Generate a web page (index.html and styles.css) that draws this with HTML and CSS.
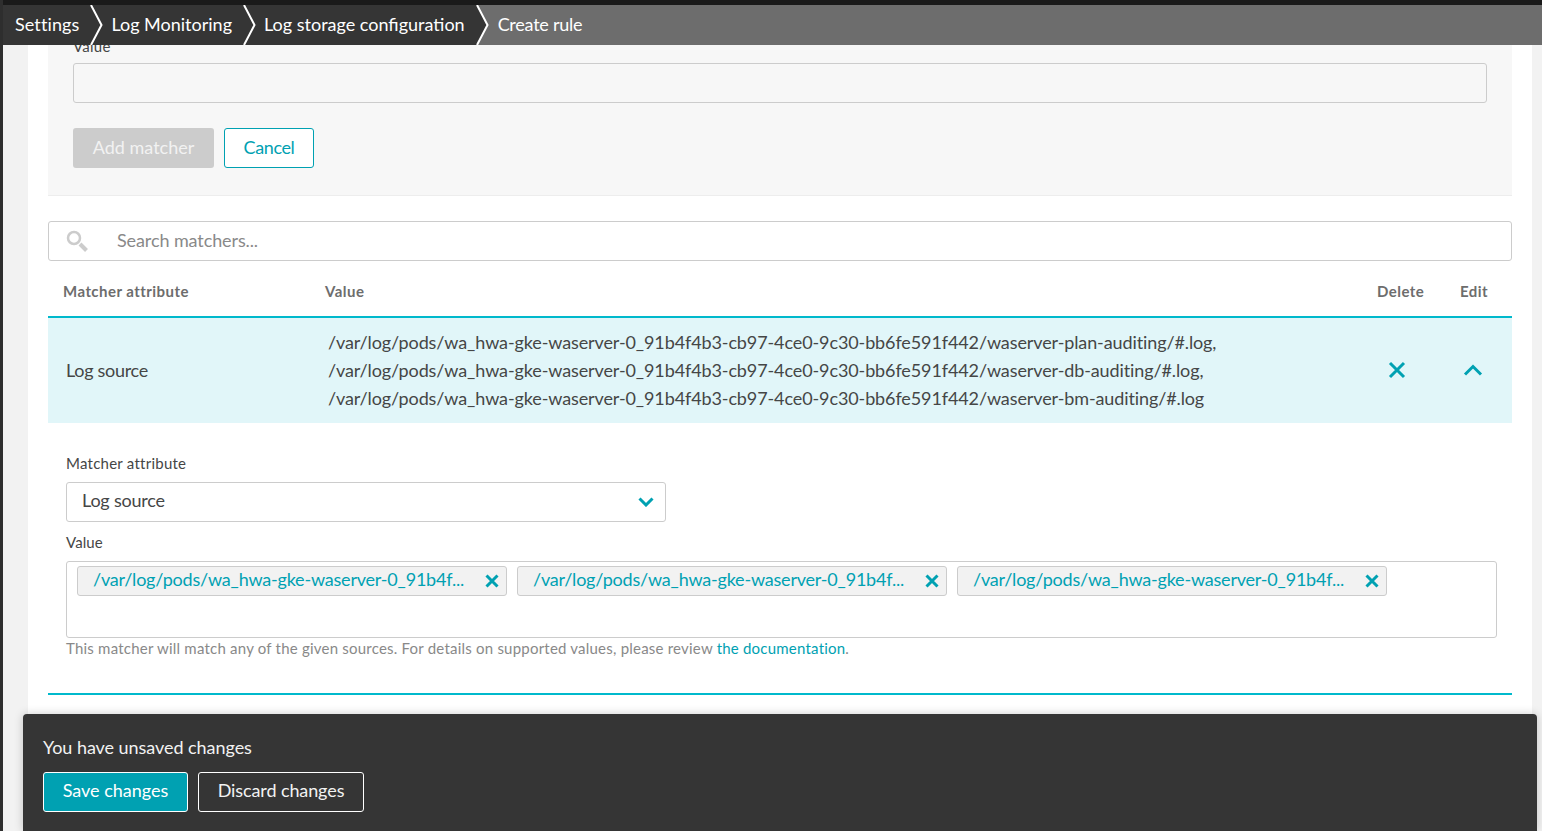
FILE: index.html
```html
<!DOCTYPE html>
<html lang="en">
<head>
    <meta charset="UTF-8">
    <title>Create rule</title>
    <link rel="stylesheet" href="styles.css">
</head>
<body>
    <div class="top-strip"></div>

    <!-- breadcrumbs -->
    <nav class="crumbs">
        <a class="crumb crumb-first">Settings<svg class="crumb-arrow" viewBox="0 0 13 40"><path d="M1 0 L11.5 20 L1 40"/></svg></a>
        <a class="crumb">Log Monitoring<svg class="crumb-arrow" viewBox="0 0 13 40"><path d="M1 0 L11.5 20 L1 40"/></svg></a>
        <a class="crumb">Log storage configuration<svg class="crumb-arrow crumb-arrow-last" viewBox="0 0 13 40"><path class="arrow-fill" d="M0 0 L1 0 L11.5 20 L1 40 L0 40 Z"/><path d="M1 0 L11.5 20 L1 40"/></svg></a>
        <span class="crumb-current">Create rule</span>
    </nav>

    <main class="page">
        <section class="add-panel">
            <label class="field-label">Value</label>
            <div class="panel-input"></div>
            <div class="panel-actions">
                <button class="btn btn-disabled">Add matcher</button>
                <button class="btn btn-outline">Cancel</button>
            </div>
        </section>

        <div class="search-box">
            <svg class="search-icon" viewBox="0 0 22 22"><circle cx="8" cy="8" r="6"/><path class="search-handle" d="M14 14 L20.5 20.5"/></svg>
            <span>Search matchers...</span>
        </div>

        <div class="table-head">
            <span class="col-attr">Matcher attribute</span>
            <span class="col-value">Value</span>
            <span class="col-delete">Delete</span>
            <span class="col-edit">Edit</span>
        </div>

        <div class="table-row">
            <span class="row-attr">Log source</span>
            <div class="row-value">
                /var/log/pods/wa_hwa-gke-waserver-0_91b4f4b3-cb97-4ce0-9c30-bb6fe591f442/waserver-plan-auditing/#.log,<br>
                /var/log/pods/wa_hwa-gke-waserver-0_91b4f4b3-cb97-4ce0-9c30-bb6fe591f442/waserver-db-auditing/#.log,<br>
                /var/log/pods/wa_hwa-gke-waserver-0_91b4f4b3-cb97-4ce0-9c30-bb6fe591f442/waserver-bm-auditing/#.log
            </div>
            <div class="row-delete">
                <svg class="icon-x" viewBox="0 0 18 18"><path d="M2 2 L16 16 M16 2 L2 16"/></svg>
            </div>
            <div class="row-edit">
                <svg class="icon-up" viewBox="0 0 20 12"><path d="M2 10.5 L10 2.5 L18 10.5"/></svg>
            </div>
        </div>

        <section class="edit-form">
            <label class="form-label">Matcher attribute</label>
            <div class="select-box">
                <span class="select-text">Log source</span>
                <svg class="icon-down" viewBox="0 0 16 10"><path d="M1.5 1.5 L8 8 L14.5 1.5"/></svg>
            </div>
            <label class="form-label form-label-value">Value</label>
            <div class="chips-box">
                <div class="chip">
                    <span class="chip-text">/var/log/pods/wa_hwa-gke-waserver-0_91b4f...</span>
                    <svg class="chip-x" viewBox="0 0 14 14"><path d="M1.5 1.5 L12.5 12.5 M12.5 1.5 L1.5 12.5"/></svg>
                </div>
                <div class="chip">
                    <span class="chip-text">/var/log/pods/wa_hwa-gke-waserver-0_91b4f...</span>
                    <svg class="chip-x" viewBox="0 0 14 14"><path d="M1.5 1.5 L12.5 12.5 M12.5 1.5 L1.5 12.5"/></svg>
                </div>
                <div class="chip">
                    <span class="chip-text">/var/log/pods/wa_hwa-gke-waserver-0_91b4f...</span>
                    <svg class="chip-x" viewBox="0 0 14 14"><path d="M1.5 1.5 L12.5 12.5 M12.5 1.5 L1.5 12.5"/></svg>
                </div>
            </div>
            <p class="help-text">This matcher will match any of the given sources. For details on supported values, please review <a>the documentation</a>.</p>
        </section>

        <div class="row-end-line"></div>
    </main>

    <!-- unsaved changes bar -->
    <div class="unsaved-bar">
        <p class="unsaved-title">You have unsaved changes</p>
        <div class="unsaved-actions">
            <button class="btn btn-save">Save changes</button>
            <button class="btn btn-discard">Discard changes</button>
        </div>
    </div>
</body>
</html>
```

FILE: styles.css
```css
* {
    box-sizing: border-box;
}

html, body {
    height: 100%;
}

body {
    margin: 0;
    overflow: hidden;
    background-color: #f2f2f2;
    border-left: 3px solid #2e2e2e;
    font-family: "Lato", "Noto Sans", sans-serif;
    font-size: 16px;
    color: #454646;
    position: relative;
}

.top-strip {
    height: 5px;
    margin-left: -3px;
    background-color: #1a1a1a;
}

/* breadcrumbs */
.crumbs {
    display: flex;
    align-items: center;
    height: 40px;
    background-color: #6d6d6d;
    color: #fff;
    font-size: 18px;
    position: relative;
    z-index: 2;
}

.crumb {
    display: flex;
    align-items: center;
    height: 40px;
    padding: 0 0 2px 8px;
    background-color: #353535;
}

.crumb-first {
    padding-left: 12px;
    letter-spacing: 0.1px;
}

.crumb-arrow {
    width: 13px;
    height: 40px;
    margin: 0 0 -2px 11px;
    flex: none;
}

.crumb-arrow path {
    fill: none;
    stroke: #fff;
    stroke-width: 2;
}

.crumb-arrow-last {
    background-color: #6d6d6d;
}

.crumb-arrow .arrow-fill {
    fill: #353535;
    stroke: none;
}

.crumb-current {
    padding-left: 9px;
    padding-bottom: 2px;
    letter-spacing: -0.25px;
}

/* page */
.page {
    width: 1504px;
    margin-left: 25px;
    margin-top: -15px;
    padding: 0 20px;
    height: 800px;
    background-color: #fff;
}

.add-panel {
    height: 166px;
    padding: 7px 25px 0;
    background-color: #f7f7f7;
    border-bottom: 1px solid #ededed;
}

.field-label {
    display: block;
    height: 18px;
    font-size: 15px;
    line-height: 18px;
    letter-spacing: 0.25px;
}

.panel-input {
    height: 40px;
    width: 1414px;
    margin-top: 8px;
    border: 1px solid #ccc;
    border-radius: 3px;
}

.panel-actions {
    display: flex;
    gap: 10px;
    margin-top: 25px;
}

.btn {
    height: 40px;
    padding: 0 0 2px;
    border-radius: 3px;
    font-family: inherit;
    font-size: 18px;
    white-space: nowrap;
    border: 1px solid transparent;
}

.btn-disabled {
    width: 141px;
    background-color: #ccc;
    color: #f2f2f2;
}

.btn-outline {
    width: 90px;
    background-color: #fff;
    border-color: #00a1b2;
    color: #00a1b2;
    letter-spacing: -0.4px;
}

.search-box {
    display: flex;
    align-items: center;
    height: 40px;
    margin-top: 25px;
    padding: 0 0 2px 17px;
    border: 1px solid #ccc;
    border-radius: 3px;
    font-size: 18px;
    letter-spacing: -0.1px;
    color: #898989;
}

.search-icon {
    width: 22px;
    height: 22px;
    margin-right: 29px;
    margin-top: 2px;
}

.search-icon circle {
    fill: none;
    stroke: #ccc;
    stroke-width: 2.5;
}

.search-handle {
    stroke: #ccc;
    stroke-width: 4;
}

.table-head {
    display: flex;
    align-items: center;
    height: 55px;
    padding-top: 4px;
    font-size: 15px;
    font-weight: 700;
    letter-spacing: 0.45px;
    color: #6d6d6d;
}

.col-attr {
    width: 277px;
    padding-left: 15px;
}

.col-value {
    width: 1052px;
}

.col-delete {
    width: 83px;
}

.table-row {
    display: flex;
    align-items: center;
    height: 107px;
    padding-bottom: 2px;
    border-top: 2px solid #00b9cc;
    background-color: #e1f6f9;
    font-size: 18px;
}

.row-attr {
    width: 280px;
    padding-left: 18px;
    letter-spacing: -0.3px;
}

.row-value {
    width: 1049px;
    line-height: 28px;
    letter-spacing: -0.107px;
    white-space: nowrap;
}

.row-delete {
    width: 74px;
    padding-left: 11px;
}

.row-edit {
    padding-left: 12px;
}

.icon-x, .icon-up, .icon-down, .chip-x {
    display: block;
    fill: none;
    stroke: #00a1b2;
}

.icon-x {
    width: 18px;
    height: 18px;
    stroke-width: 3;
}

.icon-up {
    width: 20px;
    height: 12px;
    stroke-width: 3;
}

.edit-form {
    padding: 32px 15px 0 18px;
}

.form-label {
    display: block;
    font-size: 15px;
    line-height: 16px;
    letter-spacing: 0.25px;
}

.select-box {
    display: flex;
    align-items: center;
    justify-content: space-between;
    width: 600px;
    height: 40px;
    margin-top: 11px;
    padding: 0 11px 0 15px;
    border: 1px solid #ccc;
    border-radius: 3px;
    font-size: 18px;
}

.select-text {
    padding-bottom: 4px;
    letter-spacing: -0.2px;
}

.icon-down {
    width: 16px;
    height: 10px;
    stroke-width: 3;
}

.form-label-value {
    margin-top: 12px;
    letter-spacing: 0.1px;
}

.chips-box {
    display: flex;
    gap: 10px;
    height: 77px;
    margin-top: 11px;
    padding: 4px 10px;
    border: 1px solid #ccc;
    border-radius: 3px;
}

.chip {
    display: flex;
    align-items: center;
    justify-content: space-between;
    width: 430px;
    height: 30px;
    padding: 0 7px 0 15px;
    background-color: #f2f2f2;
    border: 1px solid #ccc;
    border-radius: 3px;
    font-size: 18px;
    color: #00a1b2;
}

.chip-text {
    padding-bottom: 4px;
    letter-spacing: -0.2px;
}

.chip-x {
    width: 14px;
    height: 14px;
    stroke-width: 3;
}

.help-text {
    margin: 1px 0 0;
    font-size: 15px;
    line-height: 18px;
    letter-spacing: 0.215px;
    color: #898989;
}

.help-text a {
    color: #00a1b2;
}

.row-end-line {
    height: 2px;
    margin-top: 36px;
    background-color: #00b9cc;
}

/* unsaved changes bar */
.unsaved-bar {
    position: absolute;
    left: 20px;
    top: 714px;
    width: 1514px;
    height: 117px;
    padding: 21px 20px 0;
    background-color: #353535;
    border-radius: 4px 4px 0 0;
    box-shadow: 0 0 10px rgba(0, 0, 0, 0.2);
    z-index: 3;
}

.unsaved-title {
    margin: 0;
    font-size: 18px;
    line-height: 24px;
    letter-spacing: -0.05px;
    color: #f2f2f2;
}

.unsaved-actions {
    display: flex;
    gap: 10px;
    margin-top: 13px;
}

.btn-save {
    width: 145px;
    padding-bottom: 4px;
    background-color: #00a1b2;
    border-color: #fff;
    color: #fff;
}

.btn-discard {
    width: 166px;
    padding-bottom: 4px;
    letter-spacing: -0.1px;
    background-color: #353535;
    border-color: #fff;
    color: #f2f2f2;
}
```
